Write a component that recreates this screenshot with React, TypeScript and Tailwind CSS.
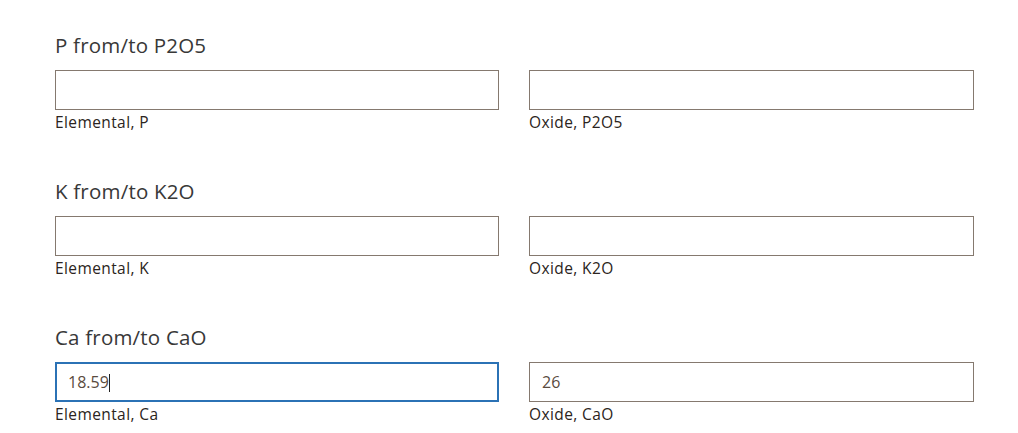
import React from 'react'

interface Conversion {
  id: string
  title: string
  elementLabel: string
  oxideLabel: string
  elementValue?: string
  oxideValue?: string
  focused?: boolean
}

const rows: Conversion[] = [
  { id: 'p', title: 'P from/to P2O5', elementLabel: 'Elemental, P', oxideLabel: 'Oxide, P2O5' },
  { id: 'k', title: 'K from/to K2O', elementLabel: 'Elemental, K', oxideLabel: 'Oxide, K2O' },
  {
    id: 'ca',
    title: 'Ca from/to CaO',
    elementLabel: 'Elemental, Ca',
    oxideLabel: 'Oxide, CaO',
    elementValue: '18.59',
    oxideValue: '26',
    focused: true,
  },
]

const Field: React.FC<{ label: string; value?: string; focused?: boolean }> = ({ label, value, focused }) => (
  <div className="flex flex-col">
    <div
      className={
        focused
          ? 'h-10 border-2 border-[#2b72b5] flex items-center px-[11px]'
          : 'h-10 border border-[#85796f] flex items-center px-3'
      }
    >
      <span className="text-[16px] text-[#5a4b40]">
        {value}
        {focused && <span className="inline-block w-px h-[18px] bg-[#222] align-middle -mt-[2px]" />}
      </span>
    </div>
    <span className="mt-[2px] text-[15.5px] leading-[20px] tracking-[0.4px] text-[#2b2420]">{label}</span>
  </div>
)

export default function App() {
  return (
    <div className="w-[1018px] h-[433px] bg-white pl-[55px] pt-[31px] font-['Open_Sans',sans-serif] overflow-hidden">
      {rows.map((row) => (
        <section key={row.id} className="mb-[45px] w-[919px]">
          <h2 className="text-[20.5px] leading-[28px] tracking-[0.2px] text-[#383838] font-normal">{row.title}</h2>
          <div className="mt-[11px] grid grid-cols-[444px_445px] gap-x-[30px]">
            <Field label={row.elementLabel} value={row.elementValue} focused={row.focused} />
            <Field label={row.oxideLabel} value={row.oxideValue} />
          </div>
        </section>
      ))}
    </div>
  )
}
